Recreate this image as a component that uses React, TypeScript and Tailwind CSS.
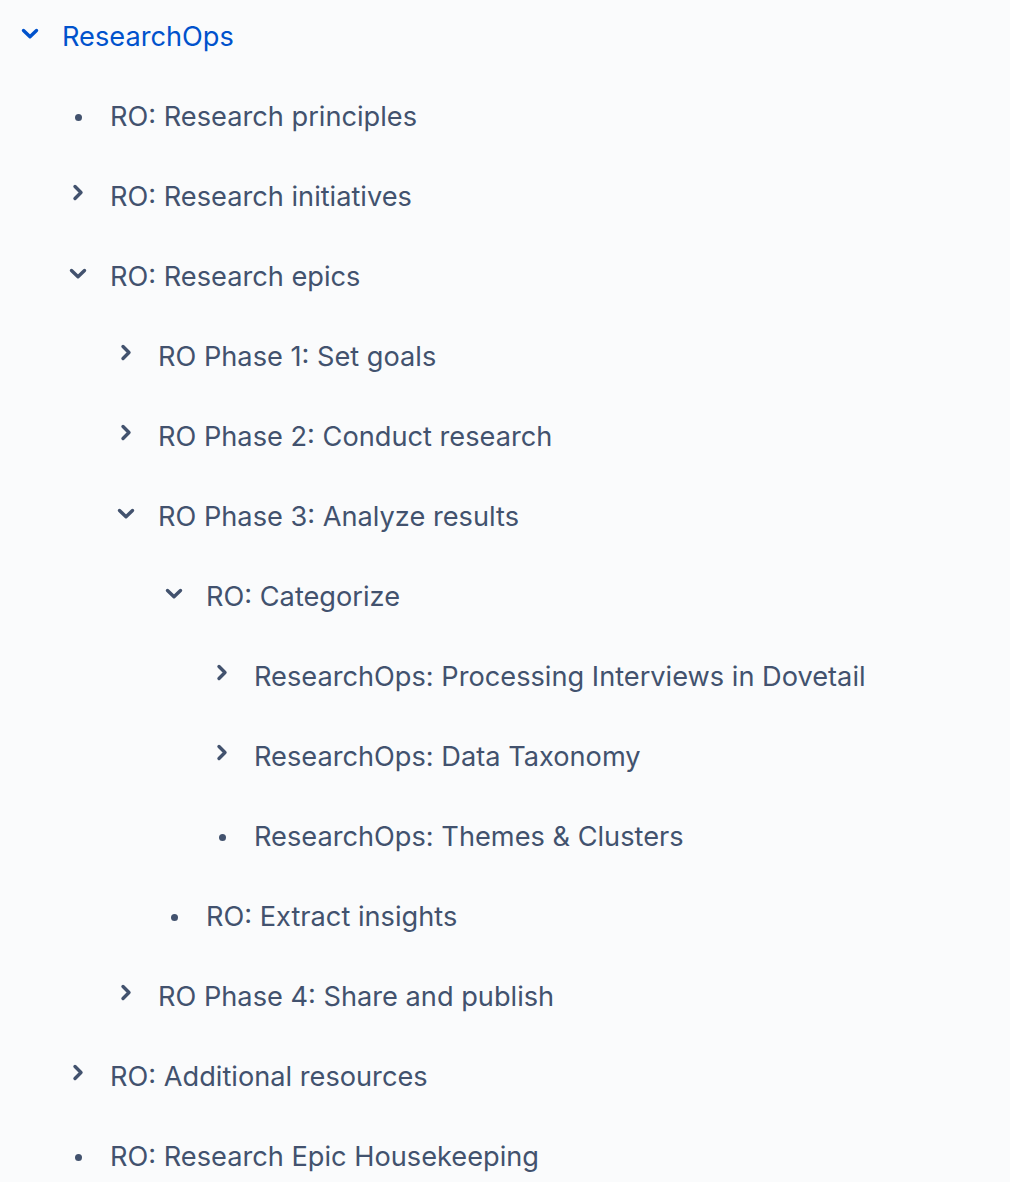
import React from "react";

type Node = { label: string; state: "open" | "closed" | "leaf"; children?: Node[]; active?: boolean };

const tree: Node[] = [
  {
    label: "ResearchOps",
    state: "open",
    active: true,
    children: [
      { label: "RO: Research principles", state: "leaf" },
      { label: "RO: Research initiatives", state: "closed" },
      {
        label: "RO: Research epics",
        state: "open",
        children: [
          { label: "RO Phase 1: Set goals", state: "closed" },
          { label: "RO Phase 2: Conduct research", state: "closed" },
          {
            label: "RO Phase 3: Analyze results",
            state: "open",
            children: [
              {
                label: "RO: Categorize",
                state: "open",
                children: [
                  { label: "ResearchOps: Processing Interviews in Dovetail", state: "closed" },
                  { label: "ResearchOps: Data Taxonomy", state: "closed" },
                  { label: "ResearchOps: Themes & Clusters", state: "leaf" },
                ],
              },
              { label: "RO: Extract insights", state: "leaf" },
            ],
          },
          { label: "RO Phase 4: Share and publish", state: "closed" },
        ],
      },
      { label: "RO: Additional resources", state: "closed" },
      { label: "RO: Research Epic Housekeeping", state: "leaf" },
    ],
  },
];

function Icon({ state, color }: { state: Node["state"]; color: string }) {
  if (state === "leaf") {
    return <span className="block w-[7px] h-[7px] rounded-full" style={{ background: color }} />;
  }
  if (state === "open") {
    return (
      <svg width="18" height="12" viewBox="0 0 18 12" fill="none" className="-mt-[6px]">
        <path d="M2.5 2.5 L9 8.8 L15.5 2.5" stroke={color} strokeWidth="3.4" strokeLinecap="round" strokeLinejoin="round" />
      </svg>
    );
  }
  return (
    <svg width="12" height="18" viewBox="0 0 12 18" fill="none" className="-mt-[8px]">
      <path d="M3 2.5 L9 8.5 L3 14.5" stroke={color} strokeWidth="3.4" strokeLinecap="round" strokeLinejoin="round" />
    </svg>
  );
}

function Row({ node, level }: { node: Node; level: number }) {
  const color = node.active ? "#0052CC" : "#42526E";
  return (
    <>
      <div className="flex items-center h-[80px]" style={{ paddingLeft: 14 + level * 48 }}>
        <div className="w-[32px] h-[32px] flex items-center justify-center">
          <Icon state={node.state} color={color} />
        </div>
        <span
          className={`ml-[16px] text-[27.2px] leading-none whitespace-nowrap ${node.active ? "text-[#0052CC]" : "text-[#42526E]"}`}
        >
          {node.label}
        </span>
      </div>
      {node.children?.map((c, i) => (
        <Row key={i} node={c} level={level + 1} />
      ))}
    </>
  );
}

export default function App() {
  return (
    <div
      className="w-[1010px] h-[1182px] bg-[#FAFBFC] overflow-hidden"
      style={{ fontFamily: "Inter, 'Noto Sans', sans-serif" }}
    >
      <div className="-mt-[3px]">
        {tree.map((n, i) => (
          <Row key={i} node={n} level={0} />
        ))}
      </div>
    </div>
  );
}
